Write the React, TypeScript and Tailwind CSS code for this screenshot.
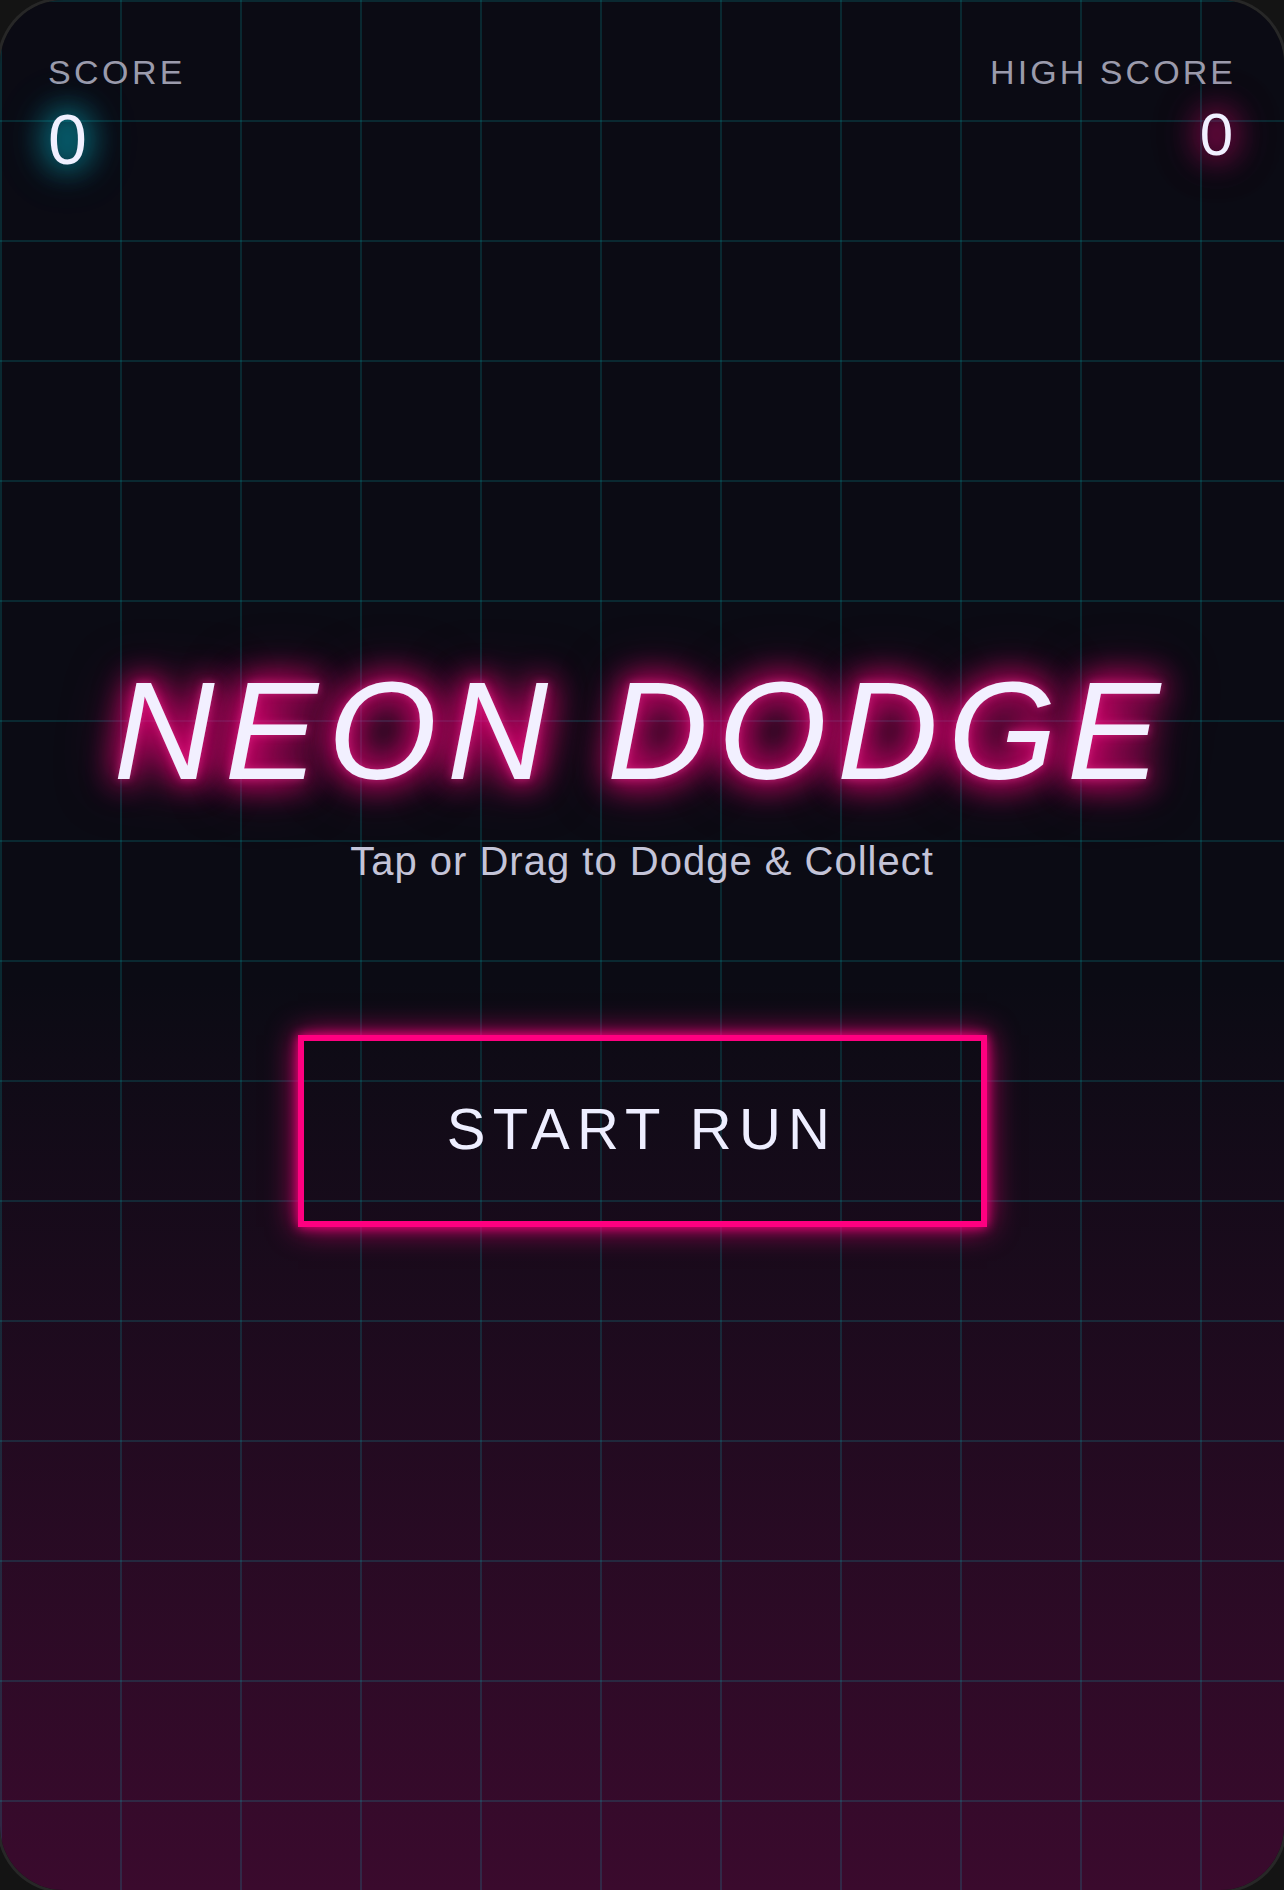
import React from "react";

export default function App() {
  return (
    <div className="w-[1284px] h-[1890px] bg-[#141414] overflow-hidden font-['Liberation_Sans',Arial,sans-serif]">
      <div className="relative h-full w-full rounded-[64px] overflow-hidden [box-shadow:0_0_0_3px_#272727] [background-image:linear-gradient(rgba(0,255,255,0.12)_2px,transparent_2px),linear-gradient(90deg,rgba(0,255,255,0.12)_2px,transparent_2px),linear-gradient(180deg,#0b0b14_0%,#0b0b14_52%,#3a0a2d_100%)] [background-size:120px_120px,120px_120px,100%_100%] flex flex-col">
        <header className="flex justify-between px-[48px] pt-[52px]">
          <div className="flex flex-col items-start">
            <span className="text-[34px] leading-[40px] tracking-[0.1em] text-[#9b9bac]">SCORE</span>
            <span className="mt-[13px] text-[70px] leading-[70px] text-[#f0f0ff] [text-shadow:0_0_28px_rgba(0,230,255,0.9),0_0_40px_rgba(0,230,255,0.6),0_0_55px_rgba(0,230,255,0.35)]">
              0
            </span>
          </div>
          <div className="flex flex-col items-end">
            <span className="text-[34px] leading-[40px] tracking-[0.09em] text-[#9b9bac]">HIGH SCORE</span>
            <span className="mt-[13px] mr-[3px] text-[60px] leading-[60px] text-[#f0f0ff] [text-shadow:0_0_28px_rgba(255,0,128,0.9),0_0_40px_rgba(255,0,128,0.6),0_0_55px_rgba(255,0,128,0.35)]">
              0
            </span>
          </div>
        </header>
        <main className="flex flex-col items-center mt-[486px]">
          <h1 className="italic font-normal text-[140px] leading-[140px] tracking-[10px] text-[#f2f0ff] [text-shadow:0_0_8px_rgba(255,60,160,0.5),0_0_30px_#ff0080,0_0_36px_rgba(255,0,128,0.9),0_0_60px_rgba(255,0,128,0.55)]">
            NEON DODGE
          </h1>
          <p className="mt-[40px] text-[40px] leading-[40px] tracking-[0.025em] text-[#c4c4d8]">
            Tap or Drag to Dodge &amp; Collect
          </p>
          <button className="mt-[154px] w-[689px] h-[192px] border-[6px] border-[#ff0080] bg-transparent flex items-center justify-center pb-[4px] [box-shadow:0_0_28px_rgba(255,0,128,0.85),0_0_10px_rgba(255,0,128,0.9)]">
            <span className="text-[58px] leading-[58px] tracking-[7.2px] text-[#eeeeff] font-['Liberation_Sans',Arial,sans-serif]">
              START RUN
            </span>
          </button>
        </main>
      </div>
    </div>
  );
}
